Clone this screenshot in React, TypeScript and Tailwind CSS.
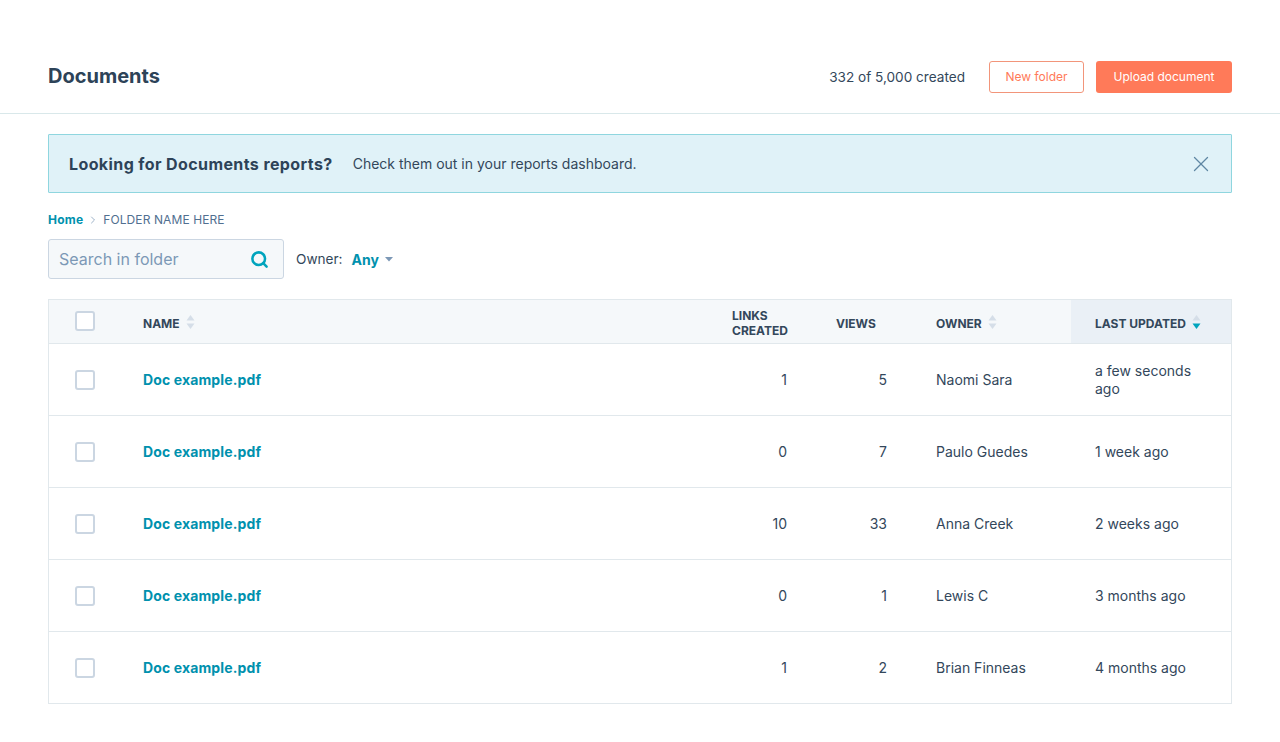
import React from 'react';
import { Search, X, ChevronRight } from 'lucide-react';

const rows = [
  { links: 1, views: 5, owner: 'Naomi Sara', updated: 'a few seconds ago' },
  { links: 0, views: 7, owner: 'Paulo Guedes', updated: '1 week ago' },
  { links: 10, views: 33, owner: 'Anna Creek', updated: '2 weeks ago' },
  { links: 0, views: 1, owner: 'Lewis C', updated: '3 months ago' },
  { links: 1, views: 2, owner: 'Brian Finneas', updated: '4 months ago' },
];

const Checkbox = () => (
  <div className="w-5 h-5 rounded-[3px] border-2 border-[#cbd6e2] bg-white" />
);

// little up/down arrows next to the column titles
const SortArrows = ({ active }: { active?: boolean }) => (
  <svg width="9" height="16" viewBox="0 0 9 16" className="shrink-0 -mt-[3px]">
    <path d="M4.5 1 L8.5 6.5 H0.5 Z" fill="#d5dee8" />
    <path d="M4.5 15 L8.5 9.5 H0.5 Z" fill={active ? '#00a4bd' : '#d5dee8'} />
  </svg>
);

const gridCols = 'grid grid-cols-[94px_1fr_103px_100px_160px_160px]';

export default function App() {
  return (
    <div className="h-[742px] w-[1280px] overflow-hidden bg-white text-[#33475b] font-['Inter','Liberation_Sans',sans-serif]">
      {/* Header */}
      <div className="h-[114px] pt-[60px] px-12 border-b border-[#d9e8ea] flex items-start justify-between">
        <h1 className="text-[20px] leading-[32px] font-bold text-[#2d4358]">Documents</h1>
        <div className="flex items-center pt-px">
          <span className="text-[13.6px] text-[#33475b] mr-6">332 of 5,000 created</span>
          <button className="w-[95px] h-8 rounded-[3px] border border-[#f2957a] bg-white text-[#ff7a59] text-[12px] mr-[12px]">New folder</button>
          <button className="w-[136px] h-8 rounded-[3px] bg-[#ff7a59] text-white text-[12px]">Upload document</button>
        </div>
      </div>

      <div className="px-12">
        {/* Banner */}
        <div className="mt-5 h-[59px] border border-[#8fd6df] bg-[#e0f2f8] rounded-[1px] pl-5 pr-[17px] flex items-center justify-between">
          <div className="flex items-center">
            <span className="text-[16px] font-bold text-[#2d4358] tracking-[0.4px] mr-5">Looking for Documents reports?</span>
            <span className="text-[14px] text-[#33475b]">Check them out in your reports dashboard.</span>
          </div>
          <X className="w-[26px] h-[26px] text-[#5f87a3]" strokeWidth={1.2} />
        </div>

        {/* Breadcrumb */}
        <div className="mt-[19px] h-[16px] flex items-center text-[12px] leading-4">
          <span className="font-bold text-[#0091ae] tracking-[0.2px]">Home</span>
          <ChevronRight className="w-3 h-3 mx-[4px] text-[#7c98b6]" strokeWidth={1.5} />
          <span className="text-[#516f90] tracking-[0.1px]">FOLDER NAME HERE</span>
        </div>

        {/* Search + owner filter */}
        <div className="mt-[11px] flex items-center">
          <div className="w-[236px] h-10 rounded-[3px] border border-[#cbd6e2] bg-[#f5f8fa] pl-[10px] pr-[14px] flex items-center justify-between">
            <span className="text-[16px] text-[#7c98b6] -mt-px">Search in folder</span>
            <Search className="w-[19px] h-[19px] text-[#00a4bd]" strokeWidth={3.2} />
          </div>
          <span className="ml-3 text-[13.6px] text-[#33475b]">Owner:</span>
          <span className="ml-[9px] text-[14px] font-bold text-[#0091ae]">Any</span>
          <svg width="8" height="5" viewBox="0 0 8 5" className="ml-[6px]">
            <path d="M0 0 H8 L4 4.5 Z" fill="#7c98b6" />
          </svg>
        </div>

        {/* Table */}
        <div className="mt-5 h-[405px] border border-[#e1e8ec]">
          <div className={`${gridCols} h-[44px] bg-[#f5f8fa] border-b border-[#e1e8ec] text-[12px] font-bold text-[#33475b]`}>
            <div className="pl-[26px] pb-px flex items-center"><Checkbox /></div>
            <div className="pt-1 flex items-center gap-[6px]">NAME <SortArrows /></div>
            <div className="pl-6 pt-[3px] flex items-center leading-[15px]">LINKS<br />CREATED</div>
            <div className="pl-[25px] pt-1 flex items-center">VIEWS</div>
            <div className="pl-[25px] pt-1 flex items-center gap-[6px]">OWNER <SortArrows /></div>
            <div className="pl-6 pt-1 flex items-center gap-[6px] bg-[#eaf0f6]">LAST UPDATED <SortArrows active /></div>
          </div>
          {rows.map((row, i) => (
            <div key={i} className={`${gridCols} text-[14px] text-[#33475b] ${i < rows.length - 1 ? 'h-[72px] border-b border-[#e1e8ec]' : 'h-[71px]'}`}>
              <div className="pl-[26px] flex items-center"><Checkbox /></div>
              <div className="flex items-center font-bold text-[#0091ae] tracking-[0.13px]">Doc example.pdf</div>
              <div className="pr-6 flex items-center justify-end">{row.links}</div>
              <div className="pr-6 flex items-center justify-end">{row.views}</div>
              <div className="pl-[25px] flex items-center">{row.owner}</div>
              <div className="pl-6 pr-6 flex items-center leading-[18px]">{row.updated}</div>
            </div>
          ))}
        </div>
      </div>
    </div>
  );
}
